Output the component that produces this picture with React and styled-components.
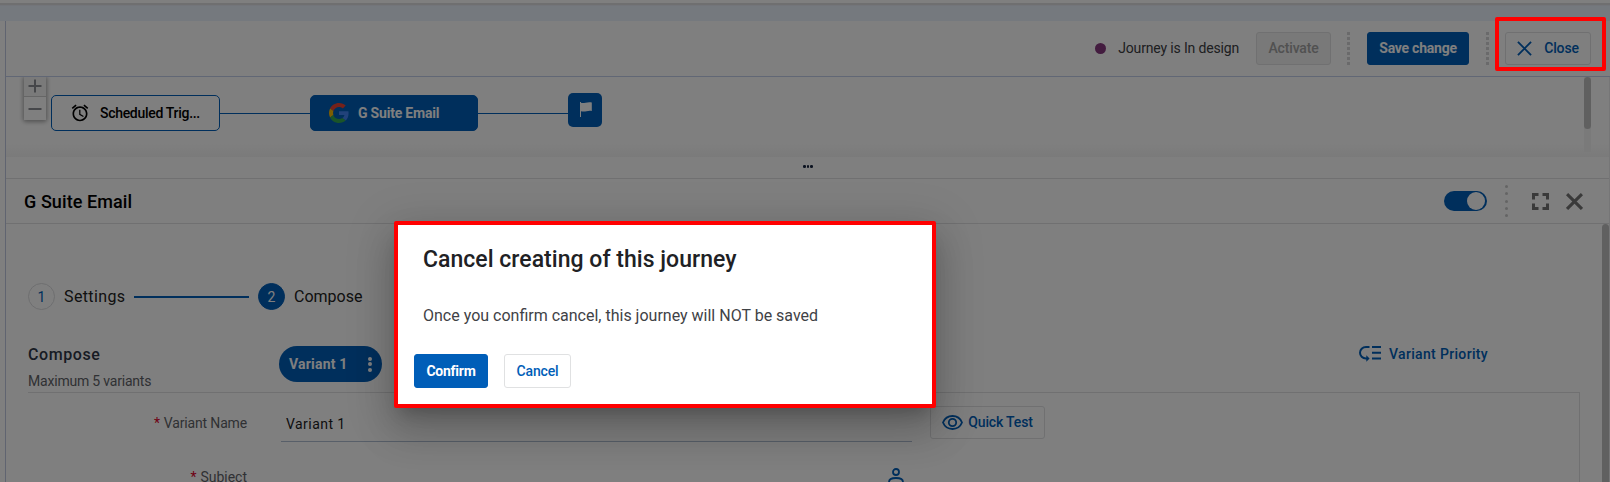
import React from "react";
import styled, { createGlobalStyle } from "styled-components";

const BLUE = "#005eb8";
const LINE = "#e0e1e2";

const GlobalStyle = createGlobalStyle`
  *, *::before, *::after { box-sizing: border-box; }
  html, body { margin: 0; height: 100%; overflow: hidden; }
  body { font-family: Roboto, "Liberation Sans", sans-serif; font-size: 14px; color: #222; background: #fff; }
  svg { display: block; flex: none; }
`;

const Page = styled.div`
  position: relative;
  width: 1610px;
  height: 482px;
  overflow: hidden;
  display: flex;
  flex-direction: column;
  background: #fff;
`;
const TopStrip = styled.div`
  flex: none;
  height: 21px;
  border-top: 3px solid #fff;
  background: linear-gradient(#dedfe1 0 2px, #e6ebf4 2px 3px, #ebf2fc 3px);
`;
const Header = styled.header`
  flex: none;
  height: 56px;
  margin-left: 5px;
  padding: 11px 19px 0 0;
  display: flex;
  align-items: flex-start;
  justify-content: flex-end;
  border-left: 1px solid #c0c8e0;
  border-bottom: 1px solid #c3cfea;
`;
const Status = styled.div`
  display: flex;
  align-items: center;
  gap: 12px;
  height: 33px;
  margin-right: 17px;
  padding-bottom: 1px;
  color: #3c4043;
  letter-spacing: -0.16px;
  white-space: nowrap;
`;
const StatusDot = styled.span`
  width: 11px;
  height: 11px;
  margin-top: 1px;
  border-radius: 50%;
  background: #86397f;
`;
const Button = styled.button`
  display: flex;
  align-items: center;
  justify-content: center;
  gap: ${(p) => p.$gap || 0}px;
  width: ${(p) => p.$width}px;
  height: ${(p) => p.$height || 33}px;
  padding: 0 0 ${(p) => (p.$height ? 0 : 1)}px;
  white-space: nowrap;
  font: 500 14px Roboto, "Liberation Sans", sans-serif;
  letter-spacing: -0.16px;
  border-radius: 3px;
  border: 1px solid ${(p) => (p.$kind === "primary" ? BLUE : LINE)};
  background: ${(p) => (p.$kind === "primary" ? BLUE : p.$kind === "disabled" ? "#f2f2f2" : "#fff")};
  color: ${(p) => (p.$kind === "primary" ? "#fff" : p.$kind === "disabled" ? "#a3a3a3" : BLUE)};
  ${(p) => p.$kind === "primary" && "font-weight: 700; letter-spacing: -0.24px;"}
`;
const DashDivider = styled.span`
  width: 3px;
  height: 33px;
  margin: 0 ${(p) => p.$right}px 0 ${(p) => p.$left}px;
  background: repeating-linear-gradient(#d4d4d6 0 3px, transparent 3px 5px);
`;

const Workspace = styled.main`
  flex: 1;
  min-height: 0;
  margin-left: 5px;
  border-left: 1px solid #c0c8e0;
  border-right: 1px solid #ececee;
  display: flex;
  flex-direction: column;
`;
const Canvas = styled.section`
  flex: none;
  height: 80px;
  display: flex;
  align-items: flex-start;
  padding-left: 18px;
  background: linear-gradient(#fff 66px, #f5f5f5 80px);
`;
const ZoomControl = styled.div`
  width: 22px;
  height: 43px;
  margin-right: 5px;
  background: #fff;
  border-radius: 0 0 2px 2px;
  box-shadow: 0 1px 4px 1px rgba(0, 0, 0, 0.35);
  clip-path: inset(0 -8px -8px -8px);
`;
const ZoomKey = styled.div`
  height: ${(p) => p.$height}px;
  display: flex;
  justify-content: center;
  align-items: ${(p) => (p.$divided ? "flex-start" : "center")};
  padding-top: ${(p) => (p.$divided ? 2 : 0)}px;
  border-bottom: ${(p) => (p.$divided ? "1px solid #ccc" : "0")};
  background: ${(p) => (p.$divided ? "#f4f4f4" : "#fff")};
`;
const Node = styled.div`
  width: ${(p) => p.$width}px;
  height: 36px;
  margin-top: 18px;
  display: flex;
  align-items: center;
  gap: ${(p) => p.$gap}px;
  padding-left: ${(p) => p.$pad}px;
  border: 1px solid ${BLUE};
  border-radius: 5px;
  background: ${(p) => (p.$filled ? BLUE : "#fff")};
  color: ${(p) => (p.$filled ? "#fff" : "#000")};
  font-weight: ${(p) => (p.$filled ? 700 : 500)};
  letter-spacing: ${(p) => p.$spacing || 0}px;
  white-space: nowrap;
`;
const Connector = styled.span`
  width: 90px;
  height: 1px;
  margin-top: 36px;
  background: ${BLUE};
`;
const EndNode = styled.div`
  width: 34px;
  height: 34px;
  margin-top: 16px;
  padding: 9px 0 0 12px;
  border-radius: 5px;
  background: ${BLUE};
`;
const CanvasScroll = styled.div`
  width: 7px;
  height: 75px;
  margin: 0 18px 0 auto;
  background: #f4f4f4;
`;
const CanvasThumb = styled.div`
  height: 52px;
  border-radius: 4px;
  background: #c1c1c1;
`;
const Splitter = styled.div`
  flex: none;
  height: 22px;
  padding: 8px 0 0 1px;
  display: flex;
  justify-content: center;
  gap: 1px;
  border-bottom: 1px solid ${LINE};
`;
const GripDot = styled.i`
  width: 2.6px;
  height: 2.6px;
  border-radius: 50%;
  background: #16233f;
`;

const PanelBar = styled.div`
  flex: none;
  height: 45px;
  padding: 0 26px 0 18px;
  display: flex;
  align-items: center;
  border-bottom: 1px solid ${LINE};
`;
const PanelTitle = styled.h2`
  margin: 1px auto 0 0;
  font-size: 18px;
  font-weight: 500;
  letter-spacing: 0.08px;
  color: #000;
`;
const Toggle = styled.span`
  width: 43px;
  height: 20px;
  padding: 1px 2px;
  border-radius: 10px;
  display: flex;
  justify-content: flex-end;
  background: ${BLUE};
`;
const Knob = styled.i`
  width: 18px;
  height: 18px;
  border-radius: 50%;
  background: #fff;
`;
const DotDivider = styled.span`
  width: 3px;
  height: 32px;
  margin: 0 24px 0 18px;
  display: flex;
  flex-direction: column;
  justify-content: space-between;
`;
const Dot = styled.i`
  width: 3px;
  height: 3px;
  border-radius: 50%;
  background: #c9c9c9;
`;
const PanelTools = styled.div`
  display: flex;
  align-items: center;
  gap: 17px;
  padding-top: 1px;
`;

const PanelBody = styled.div`
  flex: 1;
  min-height: 0;
  display: flex;
  overflow: hidden;
`;
const Content = styled.div`
  width: 1552px;
  margin-left: 22px;
  flex: none;
`;
const BodyScroll = styled.div`
  width: 7px;
  height: 270px;
  margin-left: auto;
  border-radius: 4px 4px 0 0;
  background: #c1c1c1;
`;
const Stepper = styled.div`
  display: flex;
  align-items: center;
  height: 27px;
  margin-top: 59px;
`;
const StepNumber = styled.span`
  width: 27px;
  height: 27px;
  display: flex;
  align-items: center;
  justify-content: center;
  border-radius: 50%;
  border: 1px solid ${(p) => (p.$active ? BLUE : "#dcdde0")};
  background: ${(p) => (p.$active ? BLUE : "#fff")};
  color: ${(p) => (p.$active ? "#fff" : BLUE)};
`;
const StepLabel = styled.span`
  margin-left: 9px;
  font-size: 16px;
  letter-spacing: ${(p) => p.$spacing || 0}px;
`;
const StepLine = styled.span`
  width: 115px;
  height: 2px;
  margin: 0 9px 0 auto;
  background: ${BLUE};
`;
const FirstStep = styled.div`
  width: 230px;
  display: flex;
  align-items: center;
`;
const Variants = styled.div`
  height: 83px;
  padding-top: 36px;
  display: flex;
  align-items: flex-start;
  border-bottom: 1px solid ${LINE};
`;
const SectionHead = styled.div`
  width: 251px;
`;
const SectionTitle = styled.h3`
  margin: -1px 0 0;
  font-size: 16px;
  line-height: 20px;
  font-weight: 500;
  letter-spacing: 0.6px;
  color: #2f3747;
`;
const SectionHint = styled.p`
  margin: 7px 0 0;
  line-height: 18px;
  letter-spacing: -0.2px;
  color: #5f6368;
`;
const VariantPill = styled.div`
  width: 103px;
  height: 36px;
  display: flex;
  align-items: center;
  padding: 0 10px;
  border-radius: 18px;
  background: ${BLUE};
  color: #fff;
  font-weight: 700;
  letter-spacing: 0.2px;
`;
const Kebab = styled.span`
  height: 15px;
  margin-left: auto;
  display: flex;
  flex-direction: column;
  justify-content: space-between;
`;
const KebabDot = styled.i`
  width: 4px;
  height: 4px;
  border-radius: 50%;
  background: #fff;
`;
const PriorityLink = styled.span`
  margin: -1px 0 0 auto;
  padding-right: 92px;
  display: flex;
  align-items: center;
  gap: 8px;
  color: ${BLUE};
  font-weight: 500;
  letter-spacing: 0.33px;
`;
const Form = styled.div`
  height: 110px;
  border-right: 1px solid ${LINE};
`;
const Row = styled.div`
  display: flex;
  align-items: flex-start;
  padding-top: ${(p) => p.$top}px;
`;
const Label = styled.label`
  width: 219px;
  margin-top: ${(p) => p.$top}px;
  text-align: right;
  line-height: 18px;
  letter-spacing: ${(p) => p.$spacing || 0}px;
  color: #5f6368;
`;
const Required = styled.span`
  margin-right: 4px;
  color: #e0002a;
`;
const Field = styled.div`
  width: 631px;
  height: 36px;
  margin-left: 34px;
  padding: 9px 5px 0;
  line-height: 18px;
  letter-spacing: 0.45px;
  border-bottom: 1px solid #b0bed2;
  color: #1b1c1e;
`;
const QuickTest = styled.div`
  margin-left: 18px;
`;
const SubjectTool = styled.div`
  margin-left: 641px;
`;

const Backdrop = styled.div`
  position: absolute;
  inset: 0;
  background: rgba(0, 0, 0, 0.5);
`;
const Dialog = styled.div`
  position: absolute;
  left: 394px;
  top: 221px;
  width: 542px;
  height: 187px;
  border: 4px solid #f00;
  border-radius: 2px;
  padding: 20px 16px 0;
  background: #fff;
  box-shadow: 0 11px 15px -7px rgba(0, 0, 0, 0.2), 0 24px 38px 3px rgba(0, 0, 0, 0.14),
    0 9px 46px 8px rgba(0, 0, 0, 0.12);
`;
const DialogTitle = styled.h1`
  margin: 0 0 0 9px;
  font-size: 23px;
  line-height: 30px;
  font-weight: 500;
  letter-spacing: 0.03px;
  color: #202124;
`;
const DialogText = styled.p`
  margin: 31px 0 0 9px;
  font-size: 16px;
  line-height: 20px;
  color: #3f4246;
`;
const DialogActions = styled.div`
  display: flex;
  gap: 16px;
  margin-top: 28px;
`;
const CloseFrame = styled.div`
  position: absolute;
  left: 1495px;
  top: 17px;
  width: 111px;
  height: 54px;
  border: 4px solid #f00;
  border-radius: 2px;
`;

const Cross = ({ size, color, weight }) => (
  <svg width={size} height={size} viewBox="0 0 16 16" fill="none" stroke={color} strokeWidth={weight}>
    <path d="M1 1L15 15M15 1L1 15" />
  </svg>
);
const AlarmIcon = () => (
  <svg width="20" height="20" viewBox="0 0 24 24" fill="#000">
    <path d="M12.5 8H11v6l4.75 2.85.75-1.23-4-2.37zm4.837-6.19l4.607 3.845-1.28 1.535-4.61-3.843zm-10.674 0l1.282 1.536L3.337 7.19l-1.28-1.536zM12 4c-4.97 0-9 4.03-9 9s4.03 9 9 9 9-4.03 9-9-4.03-9-9-9zm0 16c-3.86 0-7-3.14-7-7s3.14-7 7-7 7 3.14 7 7-3.14 7-7 7z" />
  </svg>
);
const GoogleIcon = () => (
  <svg width="20" height="20" viewBox="0 0 48 48">
    <path fill="#EA4335" d="M24 9.5c3.54 0 6.71 1.22 9.21 3.6l6.85-6.85C35.9 2.38 30.47 0 24 0 14.62 0 6.51 5.38 2.56 13.22l7.98 6.19C12.43 13.72 17.74 9.5 24 9.5z" />
    <path fill="#4285F4" d="M46.98 24.55c0-1.57-.15-3.09-.38-4.55H24v9.02h12.94c-.58 2.96-2.26 5.48-4.78 7.18l7.73 6c4.51-4.18 7.09-10.36 7.09-17.65z" />
    <path fill="#FBBC05" d="M10.53 28.59c-.48-1.45-.76-2.99-.76-4.59s.27-3.14.76-4.59l-7.98-6.19C.92 16.46 0 20.12 0 24c0 3.88.92 7.54 2.56 10.78l7.97-6.19z" />
    <path fill="#34A853" d="M24 48c6.48 0 11.93-2.13 15.89-5.81l-7.73-6c-2.15 1.45-4.92 2.3-8.16 2.3-6.26 0-11.57-4.22-13.47-9.91l-7.98 6.19C6.51 42.62 14.62 48 24 48z" />
  </svg>
);
const FlagIcon = () => (
  <svg width="12" height="15" viewBox="0 0 12 15">
    <path d="M0 0H1V.8C4 1.7 6.5-.4 11.8.4V9C7.5 8 5 10.6 1 9.2V15H0Z" fill="#fff" />
  </svg>
);
const FullscreenIcon = () => (
  <svg width="17" height="17" viewBox="0 0 17 17" fill="none" stroke="#757575" strokeWidth="3">
    <path d="M1.5 6.500V1.5H6.500M10.500 1.5H15.5V6.500M15.5 10.500V15.5H10.500M6.500 15.5H1.5V10.500" />
  </svg>
);
const PriorityIcon = () => (
  <svg width="22" height="17" viewBox="0 0 22 17" fill="none" stroke={BLUE} strokeWidth="2">
    <path d="M10.5 2H7C3.5 2 1 4.6 1 7.7S3.5 13.5 7 13.5H8M13 2H22M13 7.8H22M13 13.5H22" />
    <path d="M7.3 10.2L10.6 13.5L7.3 16.8Z" fill={BLUE} stroke="none" />
  </svg>
);
const EyeIcon = () => (
  <svg width="21" height="15" viewBox="0 0 21 15" fill="none" stroke={BLUE} strokeWidth="1.8">
    <path d="M1 7.5C2.6 3.6 6.2 1 10.5 1S18.4 3.6 20 7.5C18.4 11.4 14.8 14 10.5 14S2.6 11.4 1 7.5Z" />
    <circle cx="10.5" cy="7.5" r="3.7" />
  </svg>
);
const PersonIcon = () => (
  <svg width="16" height="18" viewBox="0 0 16 18" fill="none" stroke={BLUE} strokeWidth="1.8">
    <circle cx="8" cy="4" r="3" />
    <path d="M1 17V14C1 11.5 3.5 10 8 10S15 11.5 15 14V17Z" />
  </svg>
);
const ZoomGlyph = ({ plus }) => (
  <svg width="14" height="14" viewBox="0 0 14 14" stroke="#8c8f94" strokeWidth="2">
    <path d={plus ? "M.5 7H13.5M7 .5V13.5" : "M.5 7H13.5"} />
  </svg>
);

export default function App() {
  return (
    <Page>
      <GlobalStyle />
      <TopStrip />
      <Header>
        <Status>
          <StatusDot />
          Journey is In design
        </Status>
        <Button $width={75} $kind="disabled">Activate</Button>
        <DashDivider $left={16} $right={17} />
        <Button $width={102} $kind="primary">Save change</Button>
        <DashDivider $left={17} $right={16} />
        <Button $width={86} $gap={12}>
          <Cross size={15} color={BLUE} weight={2} />
          Close
        </Button>
      </Header>
      <Workspace>
        <Canvas>
          <ZoomControl>
            <ZoomKey $height={20} $divided><ZoomGlyph plus /></ZoomKey>
            <ZoomKey $height={23}><ZoomGlyph /></ZoomKey>
          </ZoomControl>
          <Node $width={169} $pad={18} $gap={10} $spacing={-0.3}>
            <AlarmIcon />
            Scheduled Trig...
          </Node>
          <Connector />
          <Node $width={168} $pad={18} $gap={9} $spacing={-0.2} $filled>
            <GoogleIcon />
            G Suite Email
          </Node>
          <Connector />
          <EndNode><FlagIcon /></EndNode>
          <CanvasScroll><CanvasThumb /></CanvasScroll>
        </Canvas>
        <Splitter><GripDot /><GripDot /><GripDot /></Splitter>
        <PanelBar>
          <PanelTitle>G Suite Email</PanelTitle>
          <Toggle><Knob /></Toggle>
          <DotDivider><Dot /><Dot /><Dot /><Dot /><Dot /></DotDivider>
          <PanelTools>
            <FullscreenIcon />
            <Cross size={17} color="#757575" weight={2.9} />
          </PanelTools>
        </PanelBar>
        <PanelBody>
          <Content>
            <Stepper>
              <FirstStep>
                <StepNumber>1</StepNumber>
                <StepLabel $spacing={0.38}>Settings</StepLabel>
                <StepLine />
              </FirstStep>
              <StepNumber $active>2</StepNumber>
              <StepLabel>Compose</StepLabel>
            </Stepper>
            <Variants>
              <SectionHead>
                <SectionTitle>Compose</SectionTitle>
                <SectionHint>Maximum 5 variants</SectionHint>
              </SectionHead>
              <VariantPill>
                Variant 1
                <Kebab><KebabDot /><KebabDot /><KebabDot /></Kebab>
              </VariantPill>
              <PriorityLink><PriorityIcon />Variant Priority</PriorityLink>
            </Variants>
            <Form>
              <Row $top={13}>
                <Label $top={8} $spacing={-0.16}><Required>*</Required>Variant Name</Label>
                <Field>Variant 1</Field>
                <QuickTest>
                  <Button $width={115} $gap={5}><EyeIcon />Quick Test</Button>
                </QuickTest>
              </Row>
              <Row $top={26}>
                <Label $top={0}><Required>*</Required>Subject</Label>
                <SubjectTool><PersonIcon /></SubjectTool>
              </Row>
            </Form>
          </Content>
          <BodyScroll />
        </PanelBody>
      </Workspace>
      <Backdrop />
      <Dialog>
        <DialogTitle>Cancel creating of this journey</DialogTitle>
        <DialogText>Once you confirm cancel, this journey will NOT be saved</DialogText>
        <DialogActions>
          <Button $width={74} $height={34} $kind="primary">Confirm</Button>
          <Button $width={67} $height={34}>Cancel</Button>
        </DialogActions>
      </Dialog>
      <CloseFrame />
    </Page>
  );
}
